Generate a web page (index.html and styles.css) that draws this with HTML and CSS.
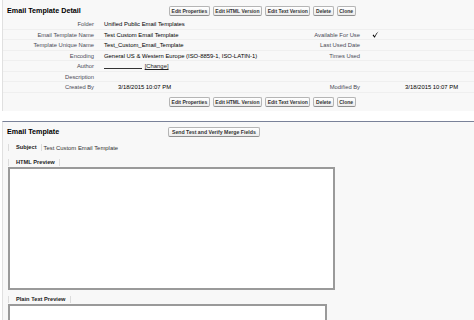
FILE: index.html
```html
<!DOCTYPE html>
<html>

<head>
    <title>Email Template Detail</title>
    <link rel="stylesheet" href="styles.css">
</head>

<body>
    <div class="page">
        <div class="block detail-block">
            <div class="block-header">
                <h2 class="block-title">Email Template Detail</h2>
                <div class="buttons">
                    <button class="btn">Edit Properties</button>
                    <button class="btn">Edit HTML Version</button>
                    <button class="btn">Edit Text Version</button>
                    <button class="btn">Delete</button>
                    <button class="btn">Clone</button>
                </div>
            </div>

            <div class="detail-grid">
                <div class="label">Folder</div>
                <div class="value">Unified Public Email Templates</div>
                <div class="label"></div>
                <div class="value"></div>

                <div class="label">Email Template Name</div>
                <div class="value">Test Custom Email Template</div>
                <div class="label">Available For Use</div>
                <div class="value">
                    <svg class="check" width="7" height="7" viewBox="0 0 7 7">
                        <path d="M0.6 4.2 L1.6 3.6 L2.6 5.2 C3.6 3.2 4.8 1.6 6.6 0.4 C5.2 2 3.9 3.9 2.9 6.6 L2.3 6.6 Z" fill="#000" />
                    </svg>
                </div>

                <div class="label">Template Unique Name</div>
                <div class="value">Test_Custom_Email_Template</div>
                <div class="label">Last Used Date</div>
                <div class="value"></div>

                <div class="label">Encoding</div>
                <div class="value">General US &amp; Western Europe (ISO-8859-1, ISO-LATIN-1)</div>
                <div class="label">Times Used</div>
                <div class="value"></div>

                <div class="label">Author</div>
                <div class="value"><span class="user-blank"></span> <a class="link" href="#">[Change]</a></div>
                <div class="label"></div>
                <div class="value"></div>

                <div class="label">Description</div>
                <div class="value"></div>
                <div class="label"></div>
                <div class="value"></div>

                <div class="label">Created By</div>
                <div class="value"><span class="date created">3/18/2015 10:07 PM</span></div>
                <div class="label">Modified By</div>
                <div class="value"><span class="date modified">3/18/2015 10:07 PM</span></div>
            </div>

            <div class="block-footer">
                <div class="buttons">
                    <button class="btn">Edit Properties</button>
                    <button class="btn">Edit HTML Version</button>
                    <button class="btn">Edit Text Version</button>
                    <button class="btn">Delete</button>
                    <button class="btn">Clone</button>
                </div>
            </div>
        </div>

        <div class="block template-block">
            <div class="block-header">
                <h2 class="block-title short">Email Template</h2>
                <div class="buttons">
                    <button class="btn wide">Send Test and Verify Merge Fields</button>
                </div>
            </div>

            <div class="subject-row">
                <span class="tab-label">Subject</span>
                <span class="subject-value">Test Custom Email Template</span>
            </div>

            <div class="preview-label"><span class="tab-label">HTML Preview</span></div>
            <div class="preview-box html-box"></div>

            <div class="preview-label"><span class="tab-label">Plain Text Preview</span></div>
            <div class="preview-box text-box"></div>
        </div>
    </div>
</body>

</html>
```

FILE: styles.css
```css
body {
    font-family: 'Liberation Sans', Arial, sans-serif;
    color: #000;
    background-color: #fff;
    margin: 0;
    padding: 0;
    overflow: hidden;
}

.page {
    padding-left: 2px;
}

.block {
    background-color: #f8f8f8;
    border-left: 1px solid #e0e0e0;
}

.block-header {
    display: flex;
    align-items: center;
    padding-left: 4px;
}

.block-title {
    margin: 0;
    width: 162px;
    font-size: 7.2px;
    font-weight: bold;
    color: #000;
}

.block-title.short {
    width: 161px;
}

.buttons {
    display: flex;
    gap: 3px;
}

.btn {
    font-family: 'Liberation Sans', Arial, sans-serif;
    font-size: 5px;
    font-weight: bold;
    line-height: 6px;
    color: #333;
    padding: 1px 1.6px;
    margin: 0;
    border: 1px solid #b5b5b5;
    border-bottom-color: #8f8f8f;
    border-radius: 2px;
    background: linear-gradient(#fff, #ececec);
    cursor: pointer;
}

.btn.wide {
    padding: 1px 3px;
    font-size: 5.2px;
}

/* detail */

.detail-block {
    padding-top: 5.5px;
    padding-bottom: 4px;
}

.detail-grid {
    display: grid;
    grid-template-columns: 95px 204px 62px 1fr;
    margin-top: 3.5px;
}

.label,
.value {
    box-sizing: border-box;
    height: 10.5px;
    line-height: 10px;
    font-size: 5.9px;
    border-bottom: 1px solid #efefef;
    white-space: nowrap;
}

.label {
    text-align: right;
    padding-right: 4px;
    color: #4a4a56;
    font-size: 5.8px;
}

.value {
    padding-left: 6px;
    color: #000;
}

.check {
    margin-left: 2px;
    vertical-align: -1px;
}

.user-blank {
    display: inline-block;
    width: 38px;
    height: 6px;
    border-bottom: 1px solid #333;
    vertical-align: -1px;
}

.link {
    color: #222;
    text-decoration: underline;
    margin-left: 1px;
}

.created {
    margin-left: 14px;
}

.modified {
    margin-left: 35px;
}

.block-footer {
    margin-top: 4px;
    padding-left: 166px;
}

/* email template */

.template-block {
    margin-top: 10px;
    border-top: 1px solid #7a8299;
    padding-top: 5px;
    padding-bottom: 20px;
}

.subject-row {
    display: flex;
    align-items: center;
    height: 10px;
    margin: 6px 0 0 5px;
    font-size: 5.9px;
}

.tab-label {
    display: inline-block;
    line-height: 7px;
    padding: 0 4px 0 7px;
    border-left: 1px solid #dcdcdc;
    border-right: 1px solid #dcdcdc;
    font-size: 5.7px;
    font-weight: bold;
    color: #222;
}

.subject-value {
    padding-left: 2px;
    color: #333;
}

.preview-label {
    display: flex;
    align-items: center;
    height: 9px;
    margin: 5px 0 0 5px;
}

.preview-box {
    box-sizing: border-box;
    margin-left: 5px;
    background-color: #fff;
    border: 2px solid #9a9a9a;
}

.html-box {
    width: 327px;
    height: 123px;
}

.text-box {
    width: 319px;
    height: 60px;
}
```
